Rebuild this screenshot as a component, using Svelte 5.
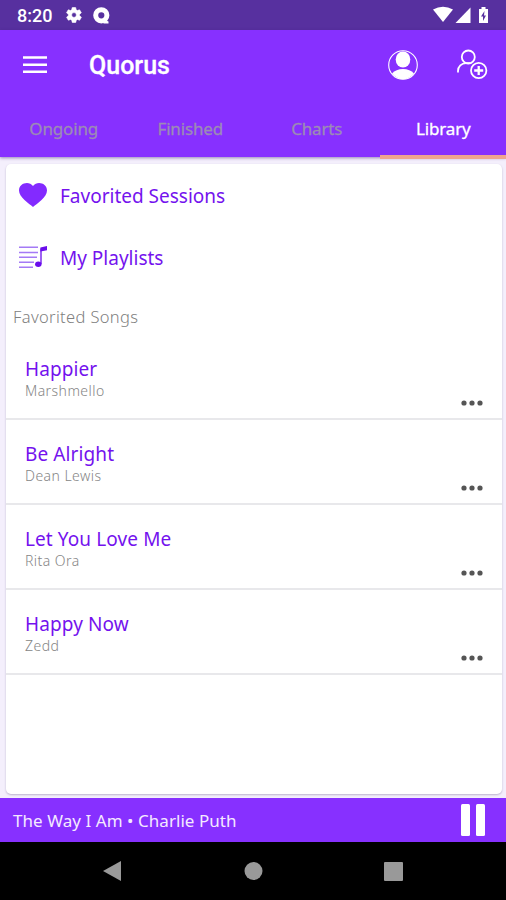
<script>
    let tabs = ['Ongoing', 'Finished', 'Charts', 'Library'];
    let activeTab = 'Library';

    let songs = [
        { title: 'Happier', artist: 'Marshmello' },
        { title: 'Be Alright', artist: 'Dean Lewis' },
        { title: 'Let You Love Me', artist: 'Rita Ora' },
        { title: 'Happy Now', artist: 'Zedd' }
    ];

    let nowPlaying = { title: 'The Way I Am', artist: 'Charlie Puth' };
</script>

<div class="screen">
    <div class="status-bar">
        <span class="clock">8:20</span>
        <svg class="gear" width="18" height="18" viewBox="0 0 24 24">
            <path d="M19.4 13a7.5 7.5 0 0 0 0-2l2.1-1.6a.5.5 0 0 0 .1-.7l-2-3.4a.5.5 0 0 0-.6-.2l-2.5 1a7.3 7.3 0 0 0-1.7-1l-.4-2.6a.5.5 0 0 0-.5-.5h-4a.5.5 0 0 0-.5.5l-.4 2.6a7.3 7.3 0 0 0-1.7 1l-2.5-1a.5.5 0 0 0-.6.2l-2 3.4a.5.5 0 0 0 .1.7L4.500 11a7.5 7.5 0 0 0 0 2l-2.1 1.6a.5.5 0 0 0-.1.7l2 3.4c.1.2.4.3.6.2l2.5-1a7.3 7.3 0 0 0 1.7 1l.4 2.6c0 .3.2.5.5.5h4c.3 0 .5-.2.5-.5l.4-2.6a7.3 7.3 0 0 0 1.7-1l2.5 1c.2.1.5 0 .6-.2l2-3.4a.5.5 0 0 0-.1-.7zM12 15.2a3.2 3.2 0 1 1 0-6.4 3.2 3.2 0 0 1 0 6.4z" fill="#fff" stroke="#fff" stroke-width=".8" fill-rule="evenodd" />
        </svg>
        <svg width="17" height="17" viewBox="0 0 17 17">
            <circle cx="8.3" cy="8.3" r="5.6" fill="none" stroke="#fff" stroke-width="5" />
            <path d="M10 12l5.500 2.5v2h-5z" fill="#fff" />
        </svg>
        <svg class="signals" width="58" height="18" viewBox="0 0 58 18">
            <path d="M0 3.500Q10 -2 20 3.500L10 16z" fill="#fff" />
            <path d="M22.500 17L37.500 1.500V17z" fill="#fff" />
            <path d="M46 3h2.500V1h4v2H55v14h-9z" fill="#fff" />
            <path d="M51.500 5l-3.500 5.500h2V15l3-5.500h-2z" fill="#57309f" />
        </svg>
    </div>

    <header>
        <div class="app-bar">
            <svg width="24" height="18" viewBox="0 0 24 18">
                <path d="M0 1.500h24M0 8.700h24M0 15.800h24" stroke="#fff" stroke-width="2.4" />
            </svg>
            <h1>Quorus</h1>
            <svg class="profile" width="30" height="30" viewBox="0 0 30 30">
                <circle cx="15" cy="15" r="14.300" fill="none" stroke="#fff" stroke-width="1.1" />
                <ellipse cx="15" cy="9.500" rx="7.300" ry="8" fill="#fff" />
                <path d="M4 23.500Q8 19 15 19T26 23.500Q21 29.300 15 29.300T4 23.500z" fill="#fff" />
            </svg>
            <svg class="add-friend" width="31" height="31" viewBox="0 0 31 31" fill="none" stroke="#fff" stroke-width="1.8">
                <circle cx="11.300" cy="8" r="6.500" />
                <path d="M1 23.500V22C1 17.500 4.500 14.300 9 14.100h4.500" />
                <circle cx="21.700" cy="21.500" r="7.700" fill="#8730ff" />
                <path d="M21.700 17v9M17.200 21.500h9" stroke-width="2.3" />
            </svg>
        </div>
        <nav class="tabs">
            {#each tabs as tab}
                <button class="tab" class:active={tab === activeTab}>{tab}</button>
            {/each}
        </nav>
    </header>

    <main>
        <div class="card">
            <div class="link">
                <svg width="28" height="24" viewBox="0 0 28 24">
                    <path d="M14 24C10 20.500 0 14.500 0 7.500C0 0 10-2.500 14 3C18-2.500 28 0 28 7.500C28 14.500 18 20.500 14 24z" fill="#832aff" />
                </svg>
                <span>Favorited Sessions</span>
            </div>
            <div class="link">
                <svg width="28" height="24" viewBox="0 0 28 24">
                    <path d="M0 2.200h19M0 7.400h19M0 12.200h18M0 17.200h15M0 22.300h14" stroke="#a47af5" stroke-width="1.5" />
                    <path d="M22 19V3.500" stroke="#6a0dec" stroke-width="1.3" />
                    <path d="M21.400 2.500L28 1v4.200l-6.600 1.300z" fill="#6a0dec" />
                    <ellipse cx="19.300" cy="19.300" rx="3.200" ry="2.700" fill="#6a0dec" />
                </svg>
                <span>My Playlists</span>
            </div>

            <h2>Favorited Songs</h2>

            {#each songs as song}
                <div class="song">
                    <div>
                        <div class="title">{song.title}</div>
                        <div class="artist">{song.artist}</div>
                    </div>
                    <svg width="22" height="6" viewBox="0 0 22 6" fill="#555">
                        <circle cx="3" cy="3" r="2.600" />
                        <circle cx="11" cy="3" r="2.600" />
                        <circle cx="19" cy="3" r="2.600" />
                    </svg>
                </div>
            {/each}
        </div>
    </main>

    <div class="player">
        <span>{nowPlaying.title} • {nowPlaying.artist}</span>
        <svg width="24" height="32" viewBox="0 0 24 32" fill="#fff">
            <rect width="9" height="32" rx="1.500" />
            <rect x="15" width="9" height="32" rx="1.500" />
        </svg>
    </div>

    <div class="system-nav">
        <svg width="300" height="24" viewBox="0 0 300 24" fill="#999">
            <path d="M0 12L18 2v20z" />
            <circle cx="150.500" cy="12" r="9" />
            <rect x="281" y="3" width="19" height="19" rx="1" />
        </svg>
    </div>
</div>

<style>
    :global(body) {
        margin: 0;
    }
    .screen {
        display: flex;
        flex-direction: column;
        width: 506px;
        height: 900px;
        overflow: hidden;
        background: #f4effc;
        font-family: "Noto Sans", "Open Sans", sans-serif;
    }
    svg {
        display: block;
        flex: none;
    }
    .status-bar {
        display: flex;
        align-items: center;
        box-sizing: border-box;
        height: 30px;
        padding: 0 15px 0 17px;
        background: #57309f;
        color: #fff;
    }
    .clock {
        width: 48px;
        font: 500 18px Roboto, sans-serif;
        margin-top: 1px;
    }
    .gear {
        margin-right: 10px;
    }
    .signals {
        margin-left: auto;
    }
    header {
        height: 127px;
        background: #8730ff;
        box-shadow: 0 1px 3px rgba(60, 30, 120, 0.5);
    }
    .app-bar {
        display: flex;
        align-items: center;
        height: 70px;
        padding: 0 18px 0 23px;
    }
    h1 {
        margin: 0 0 0 42px;
        color: #fff;
        font: 500 25px Roboto, sans-serif;
        -webkit-text-stroke: 0.3px #fff;
    }
    .profile {
        margin-left: auto;
        margin-right: 39px;
    }
    .add-friend {
        margin-top: -2px;
    }
    .tabs {
        display: grid;
        grid-template-columns: repeat(4, 1fr);
    }
    .tab {
        height: 59px;
        padding: 2px 0 0 1px;
        border: none;
        border-bottom: 4px solid transparent;
        background: none;
        color: #9c8bb5;
        font: 400 17px "Noto Sans", sans-serif;
        -webkit-text-stroke: 0.3px currentColor;
        letter-spacing: -0.15px;
    }
    .tab.active {
        border-bottom-color: #efa58f;
        color: #fff;
    }
    main {
        flex: 1;
        display: flex;
        padding: 7px 4px 4px 6px;
    }
    .card {
        flex: 1;
        border-radius: 5px;
        background: #fff;
        box-shadow: 0 1px 2px rgba(60, 40, 100, 0.3);
    }
    .link {
        display: flex;
        align-items: center;
        gap: 13px;
        height: 62px;
        padding-left: 13px;
        color: #7412ee;
        font-size: 19px;
    }
    .link span {
        padding-top: 1px;
    }
    h2 {
        height: 47px;
        margin: 0;
        padding-left: 7px;
        color: #808080;
        font-size: 16.5px;
        font-weight: 300;
        letter-spacing: 0.35px;
        line-height: 58px;
    }
    .song {
        display: flex;
        align-items: flex-end;
        justify-content: space-between;
        box-sizing: border-box;
        height: 84.9px;
        padding: 0 19px 12px 19px;
        border-bottom: 2px solid #e8e8eb;
    }
    .title {
        color: #7412ee;
        font-size: 19px;
        letter-spacing: 0.1px;
        line-height: 24px;
    }
    .artist {
        margin-bottom: 5px;
        color: #858585;
        font-size: 14px;
        font-weight: 300;
        letter-spacing: 0.45px;
        line-height: 20px;
    }
    .player {
        display: flex;
        align-items: center;
        justify-content: space-between;
        height: 44px;
        padding: 0 21px 0 13px;
        background: #8730ff;
        color: #f4e9ff;
        font-size: 17px;
        letter-spacing: 0.05px;
    }
    .system-nav {
        display: flex;
        justify-content: center;
        align-items: center;
        height: 58px;
        background: #000;
    }
</style>
